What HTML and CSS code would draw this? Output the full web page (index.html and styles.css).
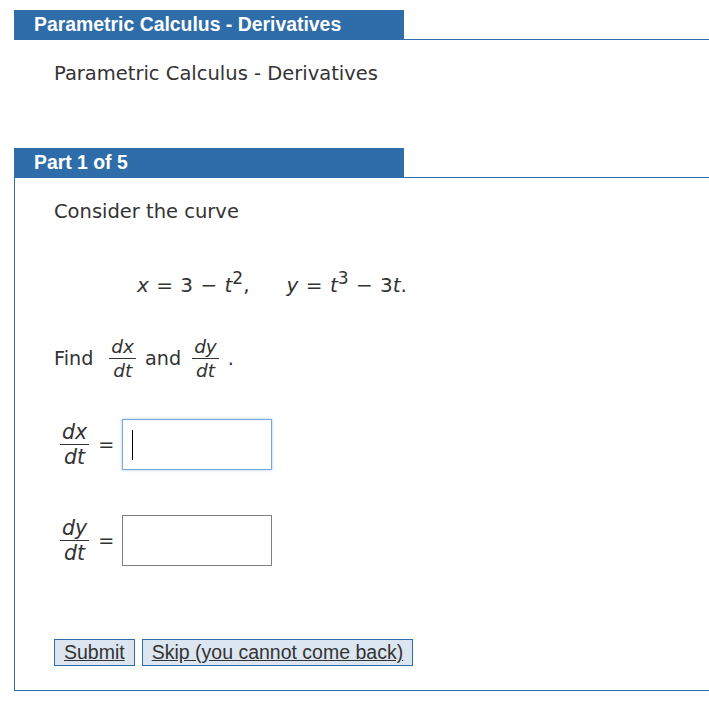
FILE: index.html
```html
<!DOCTYPE html>
<html lang="en">
<head>
    <meta charset="UTF-8">
    <title>Parametric Calculus - Derivatives</title>
    <link rel="stylesheet" href="styles.css">
</head>
<body>
    <div class="title-bar">
        <div class="title">Parametric Calculus - Derivatives</div>
    </div>
    <div class="subtitle">Parametric Calculus - Derivatives</div>

    <div class="title-bar part-bar">
        <div class="title">Part 1 of 5</div>
    </div>
    <div class="part">
        <p class="intro">Consider the curve</p>

        <div class="equation">
            <span><i>x</i> = 3 &minus; <i>t</i><sup>2</sup>,</span>
            <span><i>y</i> = <i>t</i><sup>3</sup> &minus; 3<i>t</i>.</span>
        </div>

        <div class="find">
            <span>Find</span>
            <span class="frac first"><span class="num">dx</span><span class="den">dt</span></span>
            <span>and</span>
            <span class="frac"><span class="num">dy</span><span class="den">dt</span></span>
            <span class="dot">.</span>
        </div>

        <div class="answer">
            <span class="frac big"><span class="num">dx</span><span class="den">dt</span></span>
            <span class="eq">=</span>
            <span class="field">
                <input type="text" class="box focused">
                <span class="caret"></span>
            </span>
        </div>

        <div class="answer second">
            <span class="frac big"><span class="num">dy</span><span class="den">dt</span></span>
            <span class="eq">=</span>
            <span class="field">
                <input type="text" class="box">
            </span>
        </div>

        <div class="buttons">
            <button class="btn">Submit</button>
            <button class="btn">Skip (you cannot come back)</button>
        </div>
    </div>
</body>
</html>
```
FILE: styles.css
```css
:root {
    --blue: #2e6da9;
    --text: #333;
}

* {
    box-sizing: border-box;
}

body {
    margin: 0;
    padding: 10px 0 0 14px;
    font-family: "DejaVu Sans", Verdana, sans-serif;
    font-size: 19.2px;
    color: var(--text);
    background: #fff;
}

.title-bar {
    display: flex;
    border-bottom: 1px solid var(--blue);
}

.title {
    width: 390px;
    height: 29px;
    line-height: 29px;
    padding-left: 20px;
    background: var(--blue);
    color: #fff;
    font-family: "Liberation Sans", Arial, sans-serif;
    font-weight: bold;
    font-size: 19.4px;
}

.subtitle {
    margin-top: 22px;
    padding-left: 40px;
    line-height: 24px;
    font-size: 19.5px;
}

.part-bar {
    margin-top: 62px;
}

.part {
    border-left: 1px solid var(--blue);
    border-bottom: 1px solid var(--blue);
    padding: 22px 0 24px 39px;
}

.intro {
    margin: 0;
    line-height: 24px;
    font-size: 19.5px;
}

.equation {
    display: flex;
    gap: 37px;
    margin-top: 49px;
    padding-left: 83px;
    line-height: 24px;
    font-size: 20px;
    word-spacing: 1px;
}

i {
    font-style: italic;
}

sup {
    font-size: 0.85em;
    line-height: 0;
    vertical-align: 0.45em;
}

.find {
    display: flex;
    align-items: center;
    margin-top: 37px;
    height: 48px;
}

.find .frac {
    margin: 0 9px 0 11px;
}

.find .frac.first {
    margin-left: 16px;
}

.frac {
    display: inline-flex;
    flex-direction: column;
    align-items: center;
    font-style: italic;
    font-size: 18.5px;
    line-height: 21px;
}

.frac .num {
    padding: 0 2px 1px;
    border-bottom: 1px solid var(--text);
}

.frac .den {
    padding-top: 1px;
}

.answer {
    display: flex;
    align-items: center;
    margin-top: 37px;
    padding-left: 6px;
}

.answer.second {
    margin-top: 45px;
}

.frac.big {
    font-size: 20.5px;
    line-height: 22px;
}

.eq {
    margin: 0 8px 0 9px;
}

.field {
    position: relative;
    display: inline-block;
}

.box {
    display: block;
    width: 150px;
    height: 51px;
    border: 1px solid #808080;
    font-size: 22px;
    padding: 0 9px;
    outline: none;
}

.box.focused {
    border-color: #7aa7d8;
    box-shadow: 0 0 3px rgba(122, 167, 216, 0.6);
}

.caret {
    position: absolute;
    left: 10px;
    top: 11px;
    width: 1px;
    height: 30px;
    background: #000;
}

.buttons {
    display: flex;
    gap: 7px;
    margin-top: 73px;
}

.btn {
    height: 27px;
    padding: 0 9px;
    background: #dce6f0;
    border: 1px solid var(--blue);
    border-radius: 0;
    color: var(--text);
    font-family: "Liberation Sans", Arial, sans-serif;
    font-size: 19.5px;
    line-height: 25px;
    text-decoration: underline;
    cursor: pointer;
}
```
